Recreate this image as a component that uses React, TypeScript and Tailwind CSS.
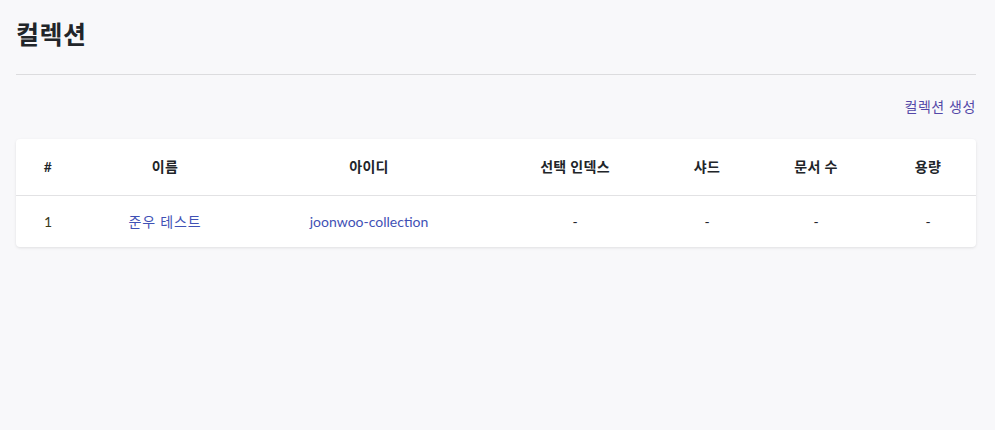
const COLUMNS = ["#", "이름", "아이디", "선택 인덱스", "샤드", "문서 수", "용량"];
const WIDTHS = ["w-[64px]", "w-[170px]", "w-[238px]", "w-[174px]", "w-[90px]", "w-[128px]", "w-[96px]"];

const ROWS = [
  { no: 1, name: "준우 테스트", id: "joonwoo-collection", index: "-", shard: "-", docs: "-", size: "-" },
];

export default function App() {
  return (
    <main className="min-h-screen bg-[#f8f8fa] pl-4 pr-[19px] pt-[17px] font-['Lato','Noto_Sans_CJK_KR',sans-serif] text-[#212529]">
      <h1 className="text-[25px] font-bold leading-[34px] tracking-[0.5px]">컬렉션</h1>
      <hr className="mt-[23px] border-t border-[#dcdcde]" />

      <div className="mt-[22px] flex justify-end">
        <a href="#" className="text-[14px] leading-[20px] tracking-[0.6px] text-[#5448a8]">
          컬렉션 생성
        </a>
      </div>

      <section className="mt-[22px] overflow-hidden rounded-[4px] bg-white shadow-[0_1px_3px_rgba(0,0,0,0.1)]">
        <table className="w-full table-fixed border-collapse text-center text-[14px]">
          <colgroup>
            {WIDTHS.map((w, i) => (
              <col key={i} className={w} />
            ))}
          </colgroup>
          <thead>
            <tr className="h-[56px] border-b border-[#e2e2e4]">
              {COLUMNS.map((c) => (
                <th key={c} className="font-semibold tracking-[0.3px]">
                  {c}
                </th>
              ))}
            </tr>
          </thead>
          <tbody>
            {ROWS.map((r) => (
              <tr key={r.no} className="h-[52px]">
                <td className="text-[#3a3a1a]">{r.no}</td>
                <td className="tracking-[0.8px] text-[#3f51b5]">{r.name}</td>
                <td className="text-[#3f51b5]">{r.id}</td>
                <td>{r.index}</td>
                <td>{r.shard}</td>
                <td>{r.docs}</td>
                <td>{r.size}</td>
              </tr>
            ))}
          </tbody>
        </table>
      </section>
    </main>
  );
}
